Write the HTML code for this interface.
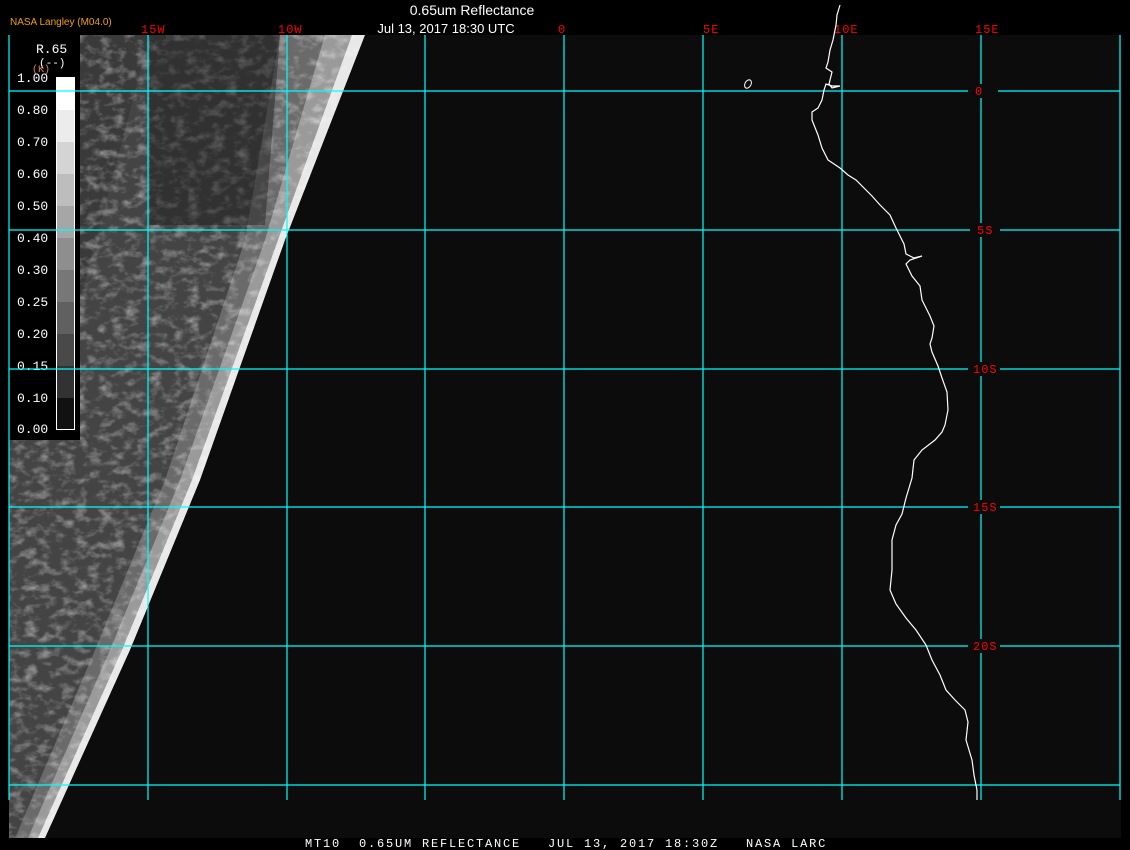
<!DOCTYPE html>
<html><head><meta charset="utf-8"><style>
html,body{margin:0;padding:0;background:#000;width:1130px;height:850px;overflow:hidden}
svg{display:block}
text{font-family:"Liberation Sans",sans-serif}
.m{font-family:"Liberation Mono",monospace}
</style></head><body>
<svg width="1130" height="850" viewBox="0 0 1130 850" xmlns="http://www.w3.org/2000/svg">
<defs>
<filter id="n" x="0" y="0" width="100%" height="100%">
<feTurbulence type="fractalNoise" baseFrequency="0.08 0.12" numOctaves="3" seed="4"/>
<feColorMatrix type="matrix" values="0 0 0 0 1  0 0 0 0 1  0 0 0 0 1  2.2 0 0 0 -1.0"/>
<feComposite in2="SourceGraphic" operator="in"/>
</filter>
<clipPath id="sw"><polygon points="9,35 365,35 285,240 200,480 130,650 45,838 9,838"/></clipPath>
</defs>
<rect x="9" y="35" width="1112" height="803" fill="#0c0c0c"/>
<g clip-path="url(#sw)">
<polygon points="9,35 365,35 285,240 200,480 130,650 45,838 9,838" fill="#3a3a3a"/>
<polygon points="9,450 80,300 150,35 365,35 285,240 200,480 130,650 45,838 9,838" fill="#444"/>
<polygon points="280,35 365,35 285,240 200,480 130,650 45,838 15,838 95,650 165,480 245,240" fill="#6a6a6a"/>
<polygon points="325,35 365,35 285,240 200,480 130,650 45,838 28,838 110,650 180,480 265,240" fill="#9a9a9a"/>
<polygon points="352,35 365,35 285,240 200,480 130,650 45,838 38,838 122,650 192,480 278,240" fill="#e8e8e8"/>
<rect x="9" y="35" width="360" height="803" fill="#fff" filter="url(#n)" opacity="0.45"/>
<polygon points="150,35 280,35 265,225 150,225" fill="#1a1a1a" opacity="0.45"/>
</g>
<rect x="9" y="35" width="71" height="405" fill="#000"/>
<g>
<rect x="56" y="77" width="19" height="33" fill="#fff"/>
<rect x="56" y="110" width="19" height="32" fill="#ececec"/>
<rect x="56" y="142" width="19" height="32" fill="#d4d4d4"/>
<rect x="56" y="174" width="19" height="32" fill="#bdbdbd"/>
<rect x="56" y="206" width="19" height="32" fill="#a6a6a6"/>
<rect x="56" y="238" width="19" height="32" fill="#8e8e8e"/>
<rect x="56" y="270" width="19" height="32" fill="#777"/>
<rect x="56" y="302" width="19" height="32" fill="#606060"/>
<rect x="56" y="334" width="19" height="32" fill="#494949"/>
<rect x="56" y="366" width="19" height="32" fill="#323232"/>
<rect x="56" y="398" width="19" height="32" fill="#111"/>
<rect x="56.5" y="77.5" width="18" height="352" fill="none" stroke="#fff"/>
</g>
<g class="m" fill="#fff" font-size="13">
<text x="36" y="53" class="m">R.65</text>
<text x="39" y="66" class="m" font-size="11">(--)</text>
<text x="32" y="72" fill="#e08060" font-size="10" class="m">(K)</text>
<text x="17" y="82" class="m">1.00</text><text x="17" y="114" class="m">0.80</text>
<text x="17" y="146" class="m">0.70</text><text x="17" y="178" class="m">0.60</text>
<text x="17" y="210" class="m">0.50</text><text x="17" y="242" class="m">0.40</text>
<text x="17" y="274" class="m">0.30</text><text x="17" y="306" class="m">0.25</text>
<text x="17" y="338" class="m">0.20</text><text x="17" y="370" class="m">0.15</text>
<text x="17" y="402" class="m">0.10</text><text x="17" y="433" class="m">0.00</text>
</g>
<g stroke="#00ffff" stroke-width="1.2">
<line x1="9" y1="35" x2="9" y2="800"/><line x1="148" y1="35" x2="148" y2="800"/>
<line x1="287" y1="35" x2="287" y2="800"/><line x1="425" y1="35" x2="425" y2="800"/>
<line x1="564" y1="35" x2="564" y2="800"/><line x1="703" y1="35" x2="703" y2="800"/>
<line x1="842" y1="35" x2="842" y2="800"/><line x1="981" y1="35" x2="981" y2="800"/>
<line x1="1120" y1="35" x2="1120" y2="800"/>
<line x1="9" y1="91" x2="1120" y2="91"/><line x1="9" y1="230" x2="1120" y2="230"/>
<line x1="9" y1="369" x2="1120" y2="369"/><line x1="9" y1="507" x2="1120" y2="507"/>
<line x1="9" y1="646" x2="1120" y2="646"/><line x1="9" y1="785" x2="1120" y2="785"/>
</g>
<g fill="#0c0c0c">
<rect x="968" y="84" width="30" height="14"/><rect x="970" y="223" width="30" height="14"/>
<rect x="968" y="362" width="32" height="14"/><rect x="968" y="500" width="32" height="14"/>
<rect x="968" y="639" width="32" height="14"/>
</g>
<g fill="#f00" font-size="12" class="m" letter-spacing="1">
<text x="975" y="95" class="m">0</text><text x="977" y="234" class="m">5S</text>
<text x="973" y="373" class="m">10S</text><text x="973" y="511" class="m">15S</text>
<text x="973" y="650" class="m">20S</text>
<text x="141" y="33" class="m">15W</text><text x="278" y="33" class="m">10W</text>
<text x="558" y="33" class="m">0</text><text x="703" y="33" class="m">5E</text>
<text x="834" y="33" class="m">10E</text><text x="975" y="33" class="m">15E</text>
</g>
<polyline fill="none" stroke="#fff" stroke-width="1.2" points="840,5 837,15 836,25 833,40 830,50 828,62 826,68 832,72 830,80 829,84 832,88 840,86 832,86 826,84 824,90 822,100 818,108 812,112 812,120 818,135 822,148 828,160 840,168 848,175 856,180 864,188 872,196 880,205 890,215 896,228 900,236 904,244 906,254 914,258 922,256 910,260 906,264 912,276 920,286 922,300 930,316 934,326 932,338 930,344 932,352 938,366 942,378 947,392 948,410 945,425 942,432 935,440 922,450 914,460 912,478 906,498 902,514 896,525 892,540 892,570 890,590 896,604 906,618 916,630 926,645 932,660 940,675 946,690 955,700 965,710 968,722 966,740 972,760 974,775 977,790 977,800"/>
<ellipse cx="748" cy="84" rx="3" ry="4.5" transform="rotate(30 748 84)" fill="none" stroke="#fff" stroke-width="1"/>
<text x="10" y="25" fill="#f0a000" font-size="10">NASA Langley (M04.0)</text>
<text x="472" y="15" fill="#fff" font-size="14" text-anchor="middle">0.65um Reflectance</text>
<text x="446" y="33" fill="#fff" font-size="13" text-anchor="middle">Jul 13, 2017 18:30 UTC</text>
<text x="305" y="847" fill="#fff" font-size="12" class="m" letter-spacing="1.8" xml:space="preserve">MT10  0.65UM REFLECTANCE   JUL 13, 2017 18:30Z   NASA LARC</text>
</svg>
</body></html>
